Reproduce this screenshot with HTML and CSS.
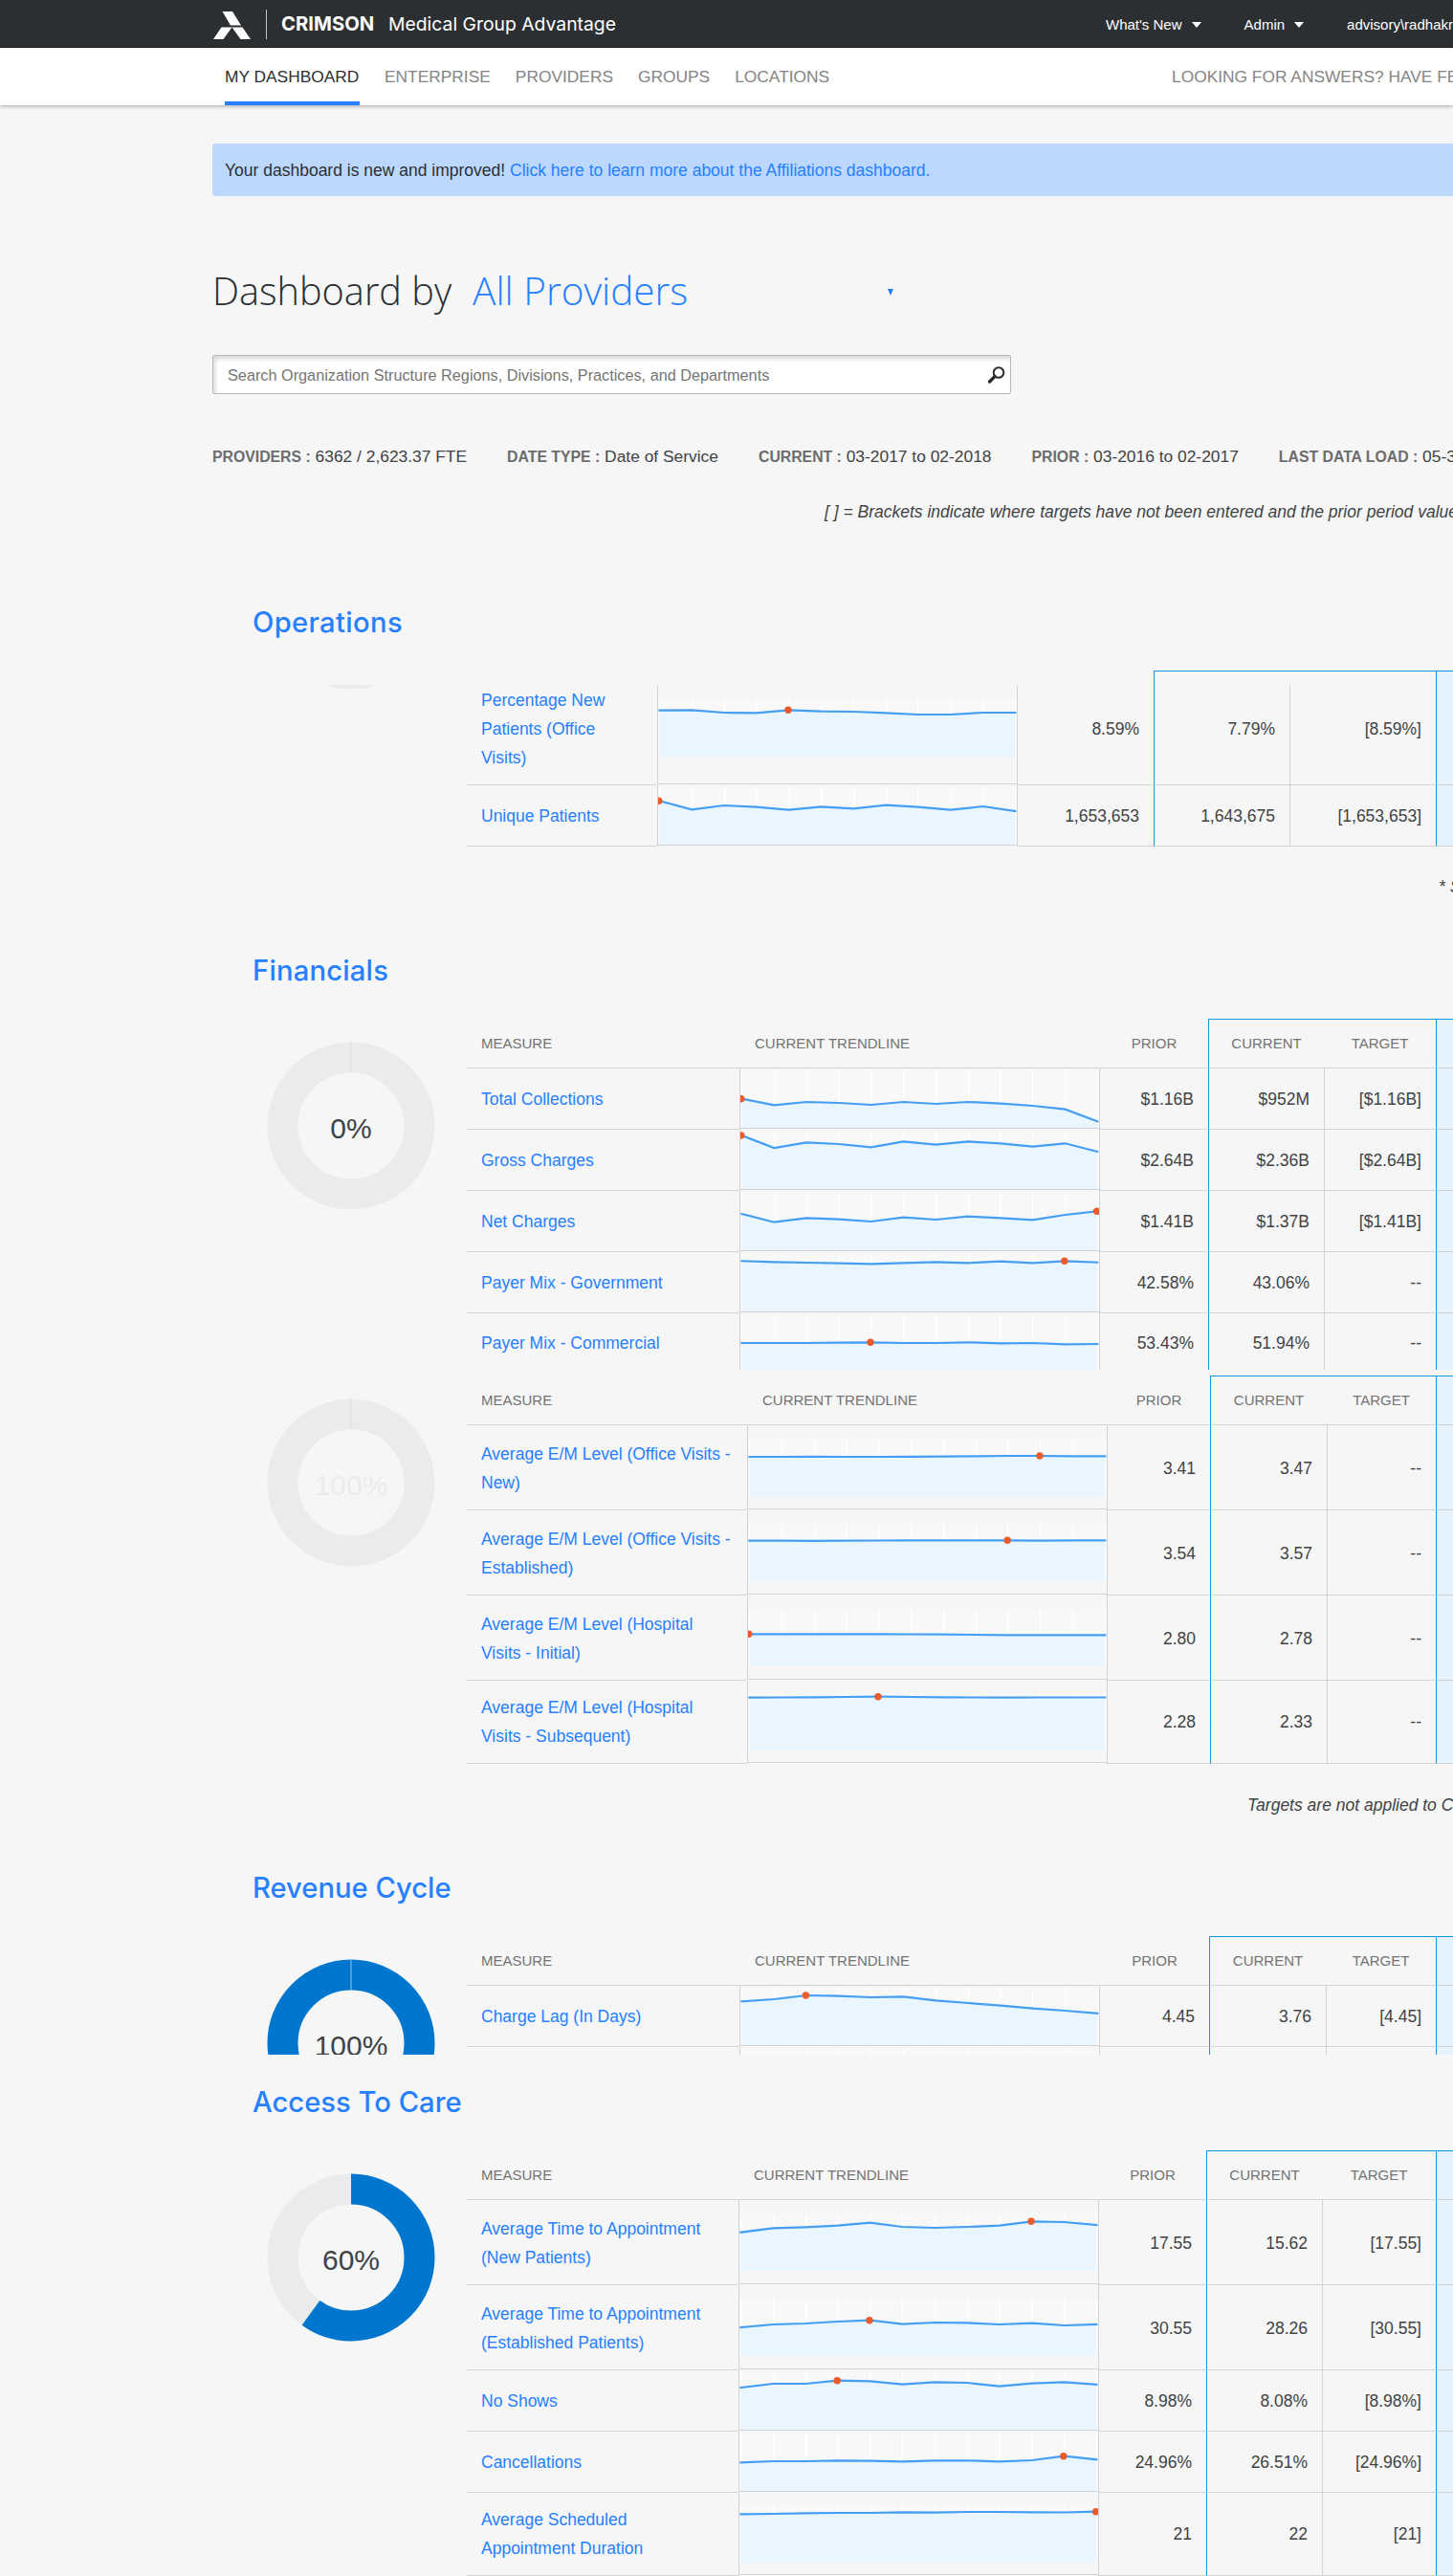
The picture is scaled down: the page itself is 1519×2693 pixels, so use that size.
FILE: index.html
```html
<!DOCTYPE html>
<html lang="en">
<head>
<meta charset="utf-8">
<title>Crimson Medical Group Advantage</title>
<link rel="stylesheet" href="styles.css">
</head>
<body>
<header class="topbar">
  <svg class="logo" width="39" height="29" viewBox="0 0 39 29"><path d="M9.5 0h10.5l9 14.5h-11z M8.5 16.5h11L10.500 29H0z M19.500 16.500h11L39 29H28.500z" fill="#fff"/></svg>
  <span class="divider"></span>
  <span class="brand">CRIMSON</span>
  <span class="product">Medical Group Advantage</span>
  <nav class="menu">
    <a>What's New<i class="caret"></i></a>
    <a>Admin<i class="caret"></i></a>
    <a>advisory\radhakri</a>
  </nav>
</header>
<nav class="nav">
  <a class="active">MY DASHBOARD</a><a>ENTERPRISE</a><a>PROVIDERS</a><a>GROUPS</a><a>LOCATIONS</a>
  <a class="help">LOOKING FOR ANSWERS? HAVE FEEDBACK?</a>
</nav>
<main class="page">
  <p class="notice">Your dashboard is new and improved! <a>Click here to learn more about the Affiliations dashboard.</a></p>
  <h1 class="title"><span>Dashboard by</span><span class="scope">All Providers</span><i class="pick"></i></h1>
  <div class="search">
    <span>Search Organization Structure Regions, Divisions, Practices, and Departments</span>
    <svg width="20" height="20" viewBox="0 0 20 20" fill="none" stroke="#2b2b2b"><circle cx="12" cy="7.500" r="5.300" stroke-width="2"/><path d="M8 11.500L2.500 17" stroke-width="3.400" stroke-linecap="round"/></svg>
  </div>
  <div class="facts">
    <span><b>PROVIDERS :</b> 6362 / 2,623.37 FTE</span>
    <span><b>DATE TYPE :</b> Date of Service</span>
    <span><b>CURRENT :</b> 03-2017 to 02-2018</span>
    <span><b>PRIOR :</b> 03-2016 to 02-2017</span>
    <span><b>LAST DATA LOAD :</b> 05-31-2018</span>
  </div>
  <p class="legend">[ ] = Brackets indicate where targets have not been entered and the prior period values</p>

  <section class="panel operations">
    <h2>Operations</h2>
    <div class="body">
      <div class="ring"><svg width="176" height="5" viewBox="0 171 176 5"><circle cx="88" cy="88" r="71.500" fill="none" stroke="#ebebeb" stroke-width="32"/></svg></div>
      <div class="table">
        <div class="row head slim"><span></span><span></span><span></span><span class="cur"></span><span></span><span class="score"></span></div>
        <div class="row triple"><a>Percentage New Patients (Office Visits)</a><span class="trend" data-dot="4" data-points="11.7,11.3,14,14.3,11.3,12.7,13,14.3,16,16,14,14"></span><span>8.59%</span><span class="cur">7.79%</span><span>[8.59%]</span><span class="score"></span></div>
        <div class="row"><a>Unique Patients</a><span class="trend" data-dot="0" data-points="14.3,23.3,19,20.7,23.7,20.3,22.3,18.7,20.7,23.7,20,25"></span><span>1,653,653</span><span class="cur">1,643,675</span><span>[1,653,653]</span><span class="score"></span></div>
      </div>
    </div>
    <p class="foot">* Score</p>
  </section>

  <section class="panel financials">
    <h2>Financials</h2>
    <div class="body">
      <div class="ring"><svg width="176" height="176" viewBox="0 0 176 176"><circle cx="88" cy="88" r="71.500" fill="none" stroke="#ebebeb" stroke-width="32"/><path d="M88 0v32" stroke="#dcdcdc"/><text x="88" y="101">0%</text></svg></div>
      <div class="table">
        <div class="row head"><span>MEASURE</span><span>CURRENT TRENDLINE</span><span>PRIOR</span><span class="cur">CURRENT</span><span>TARGET</span><span class="score"></span></div>
        <div class="row"><a>Total Collections</a><span class="trend" data-dot="0" data-points="29.7,36.3,33,34,36,33,35,33,34.7,37,40.7,53.3"></span><span>$1.16B</span><span class="cur">$952M</span><span>[$1.16B]</span><span class="score"></span></div>
        <div class="row"><a>Gross Charges</a><span class="trend" data-dot="0" data-points="4,17,11.3,13,16.3,10.3,13.7,10.3,12.3,15.7,12.3,21"></span><span>$2.64B</span><span class="cur">$2.36B</span><span>[$2.64B]</span><span class="score"></span></div>
        <div class="row"><a>Net Charges</a><span class="trend" data-dot="11" data-points="22,30.7,26.3,27.7,30,25.7,28,24.7,26.3,28.3,23,19.3"></span><span>$1.41B</span><span class="cur">$1.37B</span><span>[$1.41B]</span><span class="score"></span></div>
        <div class="row"><a>Payer Mix - Government</a><span class="trend" data-dot="10" data-points="7.3,8.3,9,9.7,10.3,9.3,8.3,9.3,7.7,9.3,7.3,8.7"></span><span>42.58%</span><span class="cur">43.06%</span><span>--</span><span class="score"></span></div>
        <div class="row cut"><a>Payer Mix - Commercial</a><span class="trend" data-dot="4" data-points="29,29,29,28.7,28.3,29,29,28.3,29.3,29,30.3,30"></span><span>53.43%</span><span class="cur">51.94%</span><span>--</span><span class="score"></span></div>
      </div>
    </div>
  </section>

  <section class="panel levels">
    <div class="body">
      <div class="ring faint"><svg width="176" height="176" viewBox="0 0 176 176"><circle cx="88" cy="88" r="71.500" fill="none" stroke="#ebebeb" stroke-width="32"/><path d="M88 0v32" stroke="#dcdcdc"/><text x="88" y="101">100%</text></svg></div>
      <div class="table">
        <div class="row head"><span>MEASURE</span><span>CURRENT TRENDLINE</span><span>PRIOR</span><span class="cur">CURRENT</span><span>TARGET</span><span class="score"></span></div>
        <div class="row tall"><a>Average E/M Level (Office Visits - New)</a><span class="trend" data-dot="9" data-points="19,19,18.8,19,19,18.8,18.7,18.4,18,18,18.3,18.3"></span><span>3.41</span><span class="cur">3.47</span><span>--</span><span class="score"></span></div>
        <div class="row tall"><a>Average E/M Level (Office Visits - Established)</a><span class="trend" data-dot="8" data-points="17.7,17.7,17.8,17.6,17.5,17.4,17.3,17.3,17.3,17.6,17.3,17.3"></span><span>3.54</span><span class="cur">3.57</span><span>--</span><span class="score"></span></div>
        <div class="row tall"><a>Average E/M Level (Hospital Visits - Initial)</a><span class="trend" data-dot="0" data-points="26.3,26.3,26.3,26.3,26.3,26.5,26.7,27,27.3,27.3,27.3,27.3"></span><span>2.80</span><span class="cur">2.78</span><span>--</span><span class="score"></span></div>
        <div class="row last"><a>Average E/M Level (Hospital Visits - Subsequent)</a><span class="trend" data-dot="4" data-points="4.7,4.5,4.3,4,3.7,4,4.3,4.5,4.7,4.5,4.5,4.5"></span><span>2.28</span><span class="cur">2.33</span><span>--</span><span class="score"></span></div>
      </div>
    </div>
    <p class="foot">Targets are not applied to Contextual Measures</p>
  </section>

  <section class="panel revenue">
    <h2>Revenue Cycle</h2>
    <div class="body">
      <div class="ring"><svg width="176" height="176" viewBox="0 0 176 176"><circle cx="88" cy="88" r="71.500" fill="none" stroke="#0076ce" stroke-width="32"/><path d="M88 0v32" stroke="#8fc4ec"/><text x="88" y="101">100%</text></svg></div>
      <div class="table">
        <div class="row head"><span>MEASURE</span><span>CURRENT TRENDLINE</span><span>PRIOR</span><span class="cur">CURRENT</span><span>TARGET</span><span class="score"></span></div>
        <div class="row"><a>Charge Lag (In Days)</a><span class="trend" data-dot="2" data-points="14.3,12,8,8.7,10,9.3,13.3,16,18.7,21.7,24,26.7"></span><span>4.45</span><span class="cur">3.76</span><span>[4.45]</span><span class="score"></span></div>
        <div class="row sliver"><a></a><span class="trend" data-points=""></span><span></span><span class="cur"></span><span></span><span class="score"></span></div>
      </div>
    </div>
  </section>

  <section class="panel access">
    <h2>Access To Care</h2>
    <div class="body">
      <div class="ring"><svg width="176" height="176" viewBox="0 0 176 176"><circle cx="88" cy="88" r="71.500" fill="none" stroke="#ebebeb" stroke-width="32"/><circle cx="88" cy="88" r="71.500" fill="none" stroke="#0076ce" stroke-width="32" pathLength="100" stroke-dasharray="60 40" transform="rotate(-90 88 88)"/><text x="88" y="101">60%</text></svg></div>
      <div class="table">
        <div class="row head"><span>MEASURE</span><span>CURRENT TRENDLINE</span><span>PRIOR</span><span class="cur">CURRENT</span><span>TARGET</span><span class="score"></span></div>
        <div class="row tall"><a>Average Time to Appointment (New Patients)</a><span class="trend" data-dot="9" data-points="19.7,15.3,14.3,12.7,9.7,14,15,14,12.7,8.3,9,12"></span><span>17.55</span><span class="cur">15.62</span><span>[17.55]</span><span class="score"></span></div>
        <div class="row tall"><a>Average Time to Appointment (Established Patients)</a><span class="trend" data-dot="4" data-points="30,27,26,24,22.7,26.7,25,25.3,27,25.7,28,27"></span><span>30.55</span><span class="cur">28.26</span><span>[30.55]</span><span class="score"></span></div>
        <div class="row"><a>No Shows</a><span class="trend" data-dot="3" data-points="16,12,12,8.7,9.3,12.7,10.3,11,14.7,11.7,10.3,12.7"></span><span>8.98%</span><span class="cur">8.08%</span><span>[8.98%]</span><span class="score"></span></div>
        <div class="row"><a>Cancellations</a><span class="trend" data-dot="10" data-points="30.3,29,29,28.3,28.7,29.3,28.3,28.3,29.3,28,23.7,27.3"></span><span>24.96%</span><span class="cur">26.51%</span><span>[24.96%]</span><span class="score"></span></div>
        <div class="row last"><a>Average Scheduled Appointment Duration</a><span class="trend" data-dot="11" data-points="9.3,9,8.3,8,8,7.3,7.7,7,7,7.3,7.5,6.7"></span><span>21</span><span class="cur">22</span><span>[21]</span><span class="score"></span></div>
      </div>
    </div>
  </section>
</main>
<script src="charts.js"></script>
</body>
</html>
```
FILE: charts.js
```js
// Draws a twelve-month sparkline in every trend cell from its data attributes.
document.querySelectorAll('.trend').forEach(function (cell) {
  var step = 33.8, left = 1.5, right = left + step * 11;
  var values = cell.dataset.points ? cell.dataset.points.split(',').map(Number) : [];
  var out = '<rect x="' + left + '" width="' + (right - left) + '" height="60" fill="#f8f8f8"/>';
  for (var i = 0; i < 12; i++) {
    out += '<rect x="' + Math.round(left + i * step - 0.5) + '" width="1.4" height="60" fill="#fff"/>';
  }
  if (values.length) {
    var pts = values.map(function (v, n) { return (left + n * step).toFixed(1) + ',' + v; });
    out += '<polygon fill="#e9f6ff" points="' + left + ',60 ' + pts.join(' ') + ' ' + right + ',60"/>' +
      '<polyline fill="none" stroke="#449ff4" stroke-width="2.2" stroke-linecap="square" points="' + pts.join(' ') + '"/>';
    var d = Number(cell.dataset.dot);
    out += '<circle r="3.7" fill="#ea5b2c" cx="' + (left + d * step - 0.7) + '" cy="' + values[d] + '"/>';
  }
  cell.innerHTML = '<svg width="375" height="60">' + out + '</svg>';
});
```
FILE: styles.css
```css
* { box-sizing: border-box; }
html, body { height: 2693px; overflow: hidden; }
body { margin: 0; background: #f6f6f6; color: #404345; font: 17.5px/30px "Liberation Sans", Arial, sans-serif; }
h1, h2, p { margin: 0; font-weight: 400; }
a { color: #2680ff; }

.topbar { display: flex; align-items: flex-start; height: 50px; padding-left: 223px; background: #2b2f32; border-bottom: 1px solid #231f20; color: #fff; white-space: nowrap; overflow: hidden; }
.logo { margin-top: 12px; flex: none; }
.divider { width: 1px; height: 31px; margin: 10px 15px 0 16px; background: #c4c6c7; flex: none; }
.brand { font: 700 20.3px/50px Inter, sans-serif; width: 112px; flex: none; }
.product { font: 400 19.35px/50px Inter, sans-serif; width: 750px; flex: none; }
.menu { display: flex; font-size: 15px; }
.menu a { color: #fff; display: flex; align-items: center; height: 51px; margin-right: 45px; }
.caret { margin-left: 10px; border: 5px solid transparent; border-top: 6px solid #fff; border-bottom: 0; }

.nav { display: flex; gap: 26px; height: 60px; padding-left: 235px; background: #fff; box-shadow: 0 1px 4px rgba(0,0,0,.35); white-space: nowrap; font-size: 17.35px; }
.nav a { color: #848484; line-height: 60px; }
.nav .active { color: #2b2f32; box-shadow: inset 0 -4px #2680ff; width: 141px; }
.nav .help { margin-left: auto; width: 294px; overflow: hidden; }

.page { padding-left: 222px; width: 1519px; overflow: hidden; }
.notice { margin-top: 40px; height: 55px; padding-left: 13px; line-height: 56px; background: #bcd8ff; border-radius: 3px 0 0 3px; color: #2b2f32; }

.title { display: flex; align-items: baseline; height: 60px; margin-top: 69px; font: 300 39.7px/60px "Open Sans", sans-serif; color: #2b2f32; white-space: nowrap; }
.title .scope { margin-left: 22px; width: 434px; font-size: 40.5px; color: #2680ff; }
.pick { align-self: flex-start; margin-top: 28px; border: 3.5px solid transparent; border-top: 7px solid #2680ff; border-bottom: 0; }

.search { display: flex; justify-content: space-between; width: 835px; height: 41px; margin-top: 37px; padding: 0 4px 0 15px; background: #fff; border: 1px solid #b9b9b9; border-radius: 2px; box-shadow: inset 2px 3px 4px rgba(0,0,0,.16); color: #757575; font-size: 16.25px; line-height: 41px; }
.search svg { margin-top: 10px; }

.facts { display: flex; gap: 42px; height: 30px; margin-top: 50px; font-size: 17.4px; white-space: nowrap; }
.facts b { color: #6a6c6d; font-size: 15.8px; line-height: 1; }
.legend { margin: 28px 0 0 640px; font-style: italic; white-space: nowrap; }

.panel h2 { height: 40px; padding: 1px 0 0 42px; color: #2680ff; font: 500 29.2px/40px Inter, sans-serif; }
.body { display: grid; grid-template-columns: 266px 1fr; }
.ring { padding: 24px 0 0 57px; }
.ring svg { display: block; }
.ring text { font: 30px "Liberation Sans", Arial, sans-serif; text-anchor: middle; fill: #404345; }
.ring.faint text { fill: #ebebeb; }

.row { display: grid; grid-template-columns: var(--cols); height: 64px; overflow: hidden; }
.row > * { display: flex; align-items: center; justify-content: flex-end; padding: 1px 15px 0 0; border-bottom: 1px solid #d2d3d4; border-left: 1px solid #d2d3d4; }
.row > :first-child { justify-content: flex-start; padding-left: 15px; border-left: 0; }
.row > .cur { border-left-color: #1197dc; }
.row > .score { border-left-color: #1197dc; background: #e5f3fe; }
.row > .trend { align-items: flex-start; justify-content: flex-start; padding: 2px 0 0; margin-bottom: 1px; overflow: hidden; }
.trend svg { display: block; flex: none; }
.tall { height: 89px; }
.tall > .trend { padding-top: 14px; }
.last { height: 87px; }
.last > *, .last > :first-child { padding-top: 0; }
.last > .trend { padding-top: 13px; }
.triple { height: 105px; }
.triple > *, .triple > :first-child { padding-bottom: 13px; }
.triple > .trend { padding-top: 15px; }
.cut { height: 59px; }
.cut > *, .sliver > * { border-bottom: 0; }
.cut > *, .cut > :first-child { padding-top: 3px; }
.cut > .trend, .sliver > .trend { margin-bottom: 0; }
.sliver { height: 8px; }
.head { height: 52px; font-size: 15px; color: #737373; }
.head > * { justify-content: center; padding: 0; border-left-color: transparent; }
.head > :nth-child(2) { justify-content: flex-start; padding-left: 15px; }
.head > :nth-child(n+4) { border-top: 1px solid #1197dc; }
.head > :nth-child(5) { border-left: 0; }
.slim { height: 15px; }
.slim > * { border-bottom: 0; }

.foot { white-space: nowrap; font-style: italic; }
.operations { --cols: 199px 376px 143px 142px 153px 18px; margin-top: 80px; }
.operations h2 { letter-spacing: .35px; }
.operations .body { margin-top: 31px; }
.operations .ring { padding-top: 15px; }
.operations .foot { margin: 27px 0 0 1282px; }
.financials { --cols: 285px 376px 114px 121px 117px 18px; margin-top: 52px; }
.financials h2 { letter-spacing: .2px; }
.financials .body { margin-top: 31px; }
.levels { --cols: 293px 376px 108px 122px 114px 18px; margin-top: 6px; }
.levels .foot { margin: 28px 0 0 1082px; }
.revenue { --cols: 285px 376px 115px 122px 115px 18px; margin-top: 51px; }
.revenue .body { margin-top: 31px; height: 124px; overflow: hidden; }
.access { --cols: 284px 376px 113px 121px 119px 18px; margin-top: 29px; }
.access .body { margin-top: 31px; }
```
